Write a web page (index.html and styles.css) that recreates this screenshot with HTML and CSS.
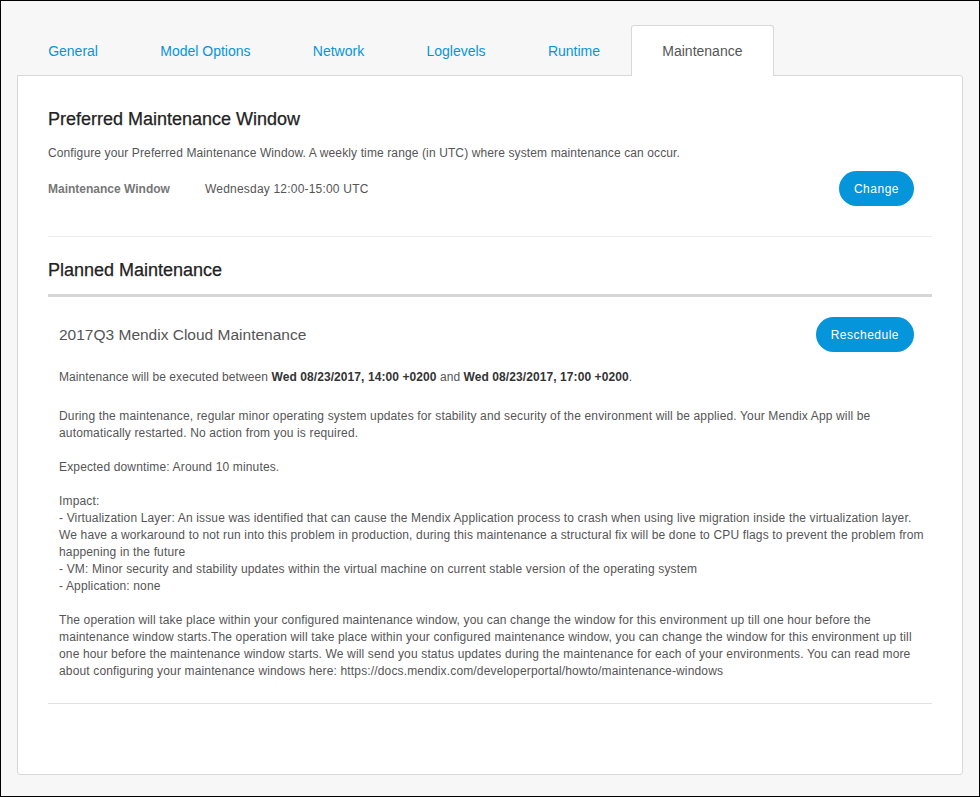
FILE: index.html
```html
<!DOCTYPE html>
<html>
<head>
<meta charset="utf-8">
<link rel="stylesheet" href="styles.css">
</head>
<body>
<div class="frame">
  <nav class="tabs">
    <a class="tab">General</a>
    <a class="tab">Model Options</a>
    <a class="tab">Network</a>
    <a class="tab">Loglevels</a>
    <a class="tab">Runtime</a>
    <a class="tab active">Maintenance</a>
  </nav>
  <div class="panel">
    <section class="pref">
      <h2 class="heading">Preferred Maintenance Window</h2>
      <p class="intro">Configure your Preferred Maintenance Window. A weekly time range (in UTC) where system maintenance can occur.</p>
      <div class="window-row">
        <span class="label">Maintenance Window</span>
        <span class="value">Wednesday 12:00-15:00 UTC</span>
        <button class="btn">Change</button>
      </div>
    </section>
    <section class="planned">
      <h2 class="heading">Planned Maintenance</h2>
      <div class="item">
        <div class="item-head">
          <h3 class="item-title">2017Q3 Mendix Cloud Maintenance</h3>
          <button class="btn">Reschedule</button>
        </div>
        <p class="when">Maintenance will be executed between <b>Wed 08/23/2017, 14:00 +0200</b> and <b>Wed 08/23/2017, 17:00 +0200</b>.</p>
        <p class="desc">During the maintenance, regular minor operating system updates for stability and security of the environment will be applied. Your Mendix App will be automatically restarted. No action from you is required.

Expected downtime: Around 10 minutes.

Impact:
- Virtualization Layer: An issue was identified that can cause the Mendix Application process to crash when using live migration inside the virtualization layer.
We have a workaround to not run into this problem in production, during this maintenance a structural fix will be done to CPU flags to prevent the problem from happening in the future
- VM: Minor security and stability updates within the virtual machine on current stable version of the operating system
- Application: none

The operation will take place within your configured maintenance window, you can change the window for this environment up till one hour before the maintenance window starts.The operation will take place within your configured maintenance window, you can change the window for this environment up till one hour before the maintenance window starts. We will send you status updates during the maintenance for each of your environments. You can read more about configuring your maintenance windows here: https://docs.mendix.com/developerportal/howto/maintenance-windows</p>
      </div>
    </section>
  </div>
</div>
</body>
</html>
```
FILE: styles.css
```css
html, body {
  margin: 0;
  padding: 0;
}
body {
  background: #f7f7f7;
  font-family: "Liberation Sans", Arial, sans-serif;
  color: #555;
}
.frame {
  box-sizing: border-box;
  width: 980px;
  height: 797px;
  border: 1px solid #000;
  padding: 24px 16px 0 16px;
  display: flex;
  flex-direction: column;
}
.tabs {
  display: flex;
  height: 51px;
  margin-bottom: -1px;
  position: relative;
  z-index: 1;
}
.tab {
  box-sizing: border-box;
  height: 51px;
  padding: 0 30.15px;
  display: flex;
  align-items: center;
  font-size: 14px;
  color: #0595db;
  border: 1px solid transparent;
  border-bottom: none;
}
.tab.active {
  background: #fff;
  color: #555;
  border-color: #d8d8d8;
  border-radius: 3px 3px 0 0;
}
.panel {
  box-sizing: border-box;
  height: 700px;
  background: #fff;
  border: 1px solid #d8d8d8;
  border-radius: 0 3px 3px 3px;
  padding: 31px 30px 0 30px;
}
.heading {
  margin: 0;
  font-size: 18px;
  line-height: 24px;
  font-weight: normal;
  color: #222;
  -webkit-text-stroke: 0.25px #222;
}
.intro {
  margin: 14px 0 0;
  font-size: 12px;
  line-height: 17px;
  letter-spacing: 0.12px;
}
.window-row {
  display: flex;
  align-items: center;
  margin-top: 9px;
  padding-bottom: 30px;
  border-bottom: 1px solid #eee;
  font-size: 12px;
}
.label {
  width: 157px;
  font-weight: bold;
  color: #777;
}
.value {
  flex: 1;
  letter-spacing: 0.2px;
}
.btn {
  height: 35px;
  border: none;
  border-radius: 18px;
  background: #0595db;
  color: #fff;
  font-family: "Liberation Sans", Arial, sans-serif;
  font-size: 12px;
  letter-spacing: 0.5px;
  padding: 0 15px;
  margin-right: 18px;
}
.planned .heading {
  margin-top: 21px;
}
.item {
  margin-top: 12px;
  border-top: 3px solid #d6d6d6;
  border-bottom: 1px solid #e2e2e2;
  padding: 20px 0 23px 11px;
}
.item-head {
  display: flex;
  align-items: center;
  justify-content: space-between;
}
.item-title {
  margin: 0;
  font-size: 15.5px;
  font-weight: normal;
  color: #555;
}
.when {
  margin: 17px 0 0;
  font-size: 12px;
  line-height: 17px;
  letter-spacing: 0.08px;
}
.when b {
  color: #333;
}
.desc {
  margin: 22px 0 0;
  font-size: 12px;
  line-height: 17px;
  letter-spacing: 0.15px;
  white-space: pre-line;
}
```
